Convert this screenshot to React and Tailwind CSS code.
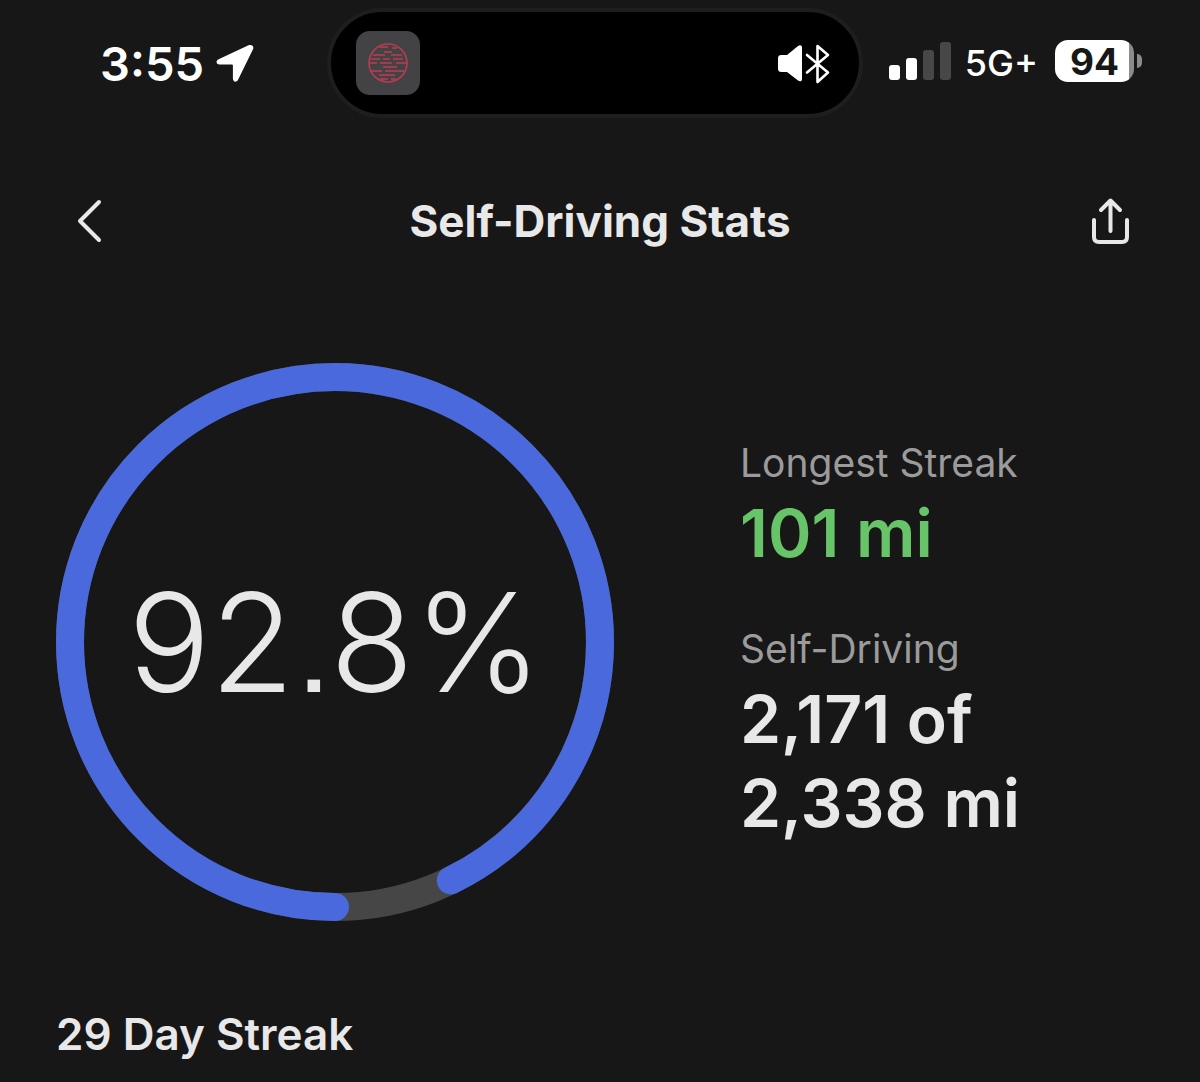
import React from "react";

const stats = [
  { label: "Longest Streak", lines: ["101 mi"], color: "text-[#68c468]" },
  { label: "Self-Driving", lines: ["2,171 of", "2,338 mi"], color: "text-[#e8e8e8]" },
];

const bands = [
  "M12 5h9", "M25 6h5", "M17 10h8", "M6 13h12", "M24 13h11", "M4 17h9", "M16 17h7", "M26 17h10",
  "M2 21h8", "M13 21h12", "M29 21h11", "M16 25h14", "M3 29h12", "M18 29h19", "M12 33h16", "M13 37h8", "M24 37h5",
];

const StatusBar = () => {
  return (
    <div className="grid grid-cols-[1fr_536px_1fr] items-center pl-12 pr-[58px] pt-2 text-white">
      <div className="flex items-center gap-3 pl-[52px]">
        <span className="text-[47px] leading-none font-semibold">3:55</span>
        <svg className="size-[38px]" viewBox="0 0 38 38" fill="white">
          <path d="M32.500 1.300 2.600 15.200C-.6 16.800 .2 20.500 3.400 20.500H15.900q1 0 1 1V34.500c0 3.600 3.800 4.300 5.300 1.100L37 5.300C38.400 2.200 35.600 0 32.500 1.300Z" />
        </svg>
      </div>

      <div className="flex h-[110px] items-center justify-between rounded-full border-4 border-[#1e1e20] bg-black pl-[25px] pr-[29px]">
        <div className="flex size-16 items-center justify-center rounded-[14px] bg-[#434346]">
          <svg className="size-[42px]" viewBox="0 0 42 42" fill="none" stroke="#b83c50" strokeWidth="1.600">
            <circle cx="21" cy="21" r="19" />
            {bands.map((d) => (
              <path key={d} d={d} />
            ))}
          </svg>
        </div>
        <svg className="h-[42px] w-[53px]" viewBox="0 0 53 42" fill="none">
          <path
            d="M4.500 13H10L21 4c2-1.500 4-.8 4 1.500V37c0 2.300-2 3-4 1.500L10 30H4.500C2 30 1 29 1 26.500v-10C1 14 2 13 4.500 13Z"
            fill="white"
          />
          <path
            d="M30 13 51 30.500 40.500 40V4L51 13 30 30.500"
            stroke="white"
            strokeWidth="2.600"
            strokeLinecap="round"
            strokeLinejoin="round"
          />
        </svg>
      </div>

      <div className="flex items-center justify-end">
        <div className="mb-1 flex h-[38px] items-end gap-[6px]">
          <div className="h-[15px] w-[11px] rounded-[3px] bg-white"></div>
          <div className="h-[22px] w-[11px] rounded-[3px] bg-white"></div>
          <div className="h-[30px] w-[11px] rounded-[3px] bg-[#474747]"></div>
          <div className="h-[38px] w-[11px] rounded-[3px] bg-[#474747]"></div>
        </div>
        <span className="ml-[14px] text-[36px] leading-none font-medium">5G+</span>
        <div className="mb-1 ml-[17px] flex items-center gap-[3px]">
          <div className="flex h-[42px] w-[79px] items-center justify-center rounded-[13px] bg-linear-to-r from-white from-94% to-[#8b8b8b] to-94% text-[37px] leading-none font-bold text-[#171717]">
            94
          </div>
          <div className="h-[14px] w-[5px] rounded-r-full bg-[#8b8b8b]"></div>
        </div>
      </div>
    </div>
  );
};

const Ring = ({ percent }) => {
  return (
    <div className="grid size-[558px] shrink-0 place-items-center">
      <svg className="col-start-1 row-start-1 size-full rotate-90" viewBox="0 0 558 558" fill="none" strokeWidth="28">
        <circle cx="279" cy="279" r="265" stroke="#464646" />
        <circle
          cx="279"
          cy="279"
          r="265"
          stroke="#4a69dd"
          strokeLinecap="round"
          pathLength="100"
          strokeDasharray={`${percent} 100`}
        />
      </svg>
      <span className="col-start-1 row-start-1 text-[137px] leading-none font-light [font-feature-settings:'ss07']">
        {percent}%
      </span>
    </div>
  );
};

const App = () => {
  return (
    <div className="min-h-screen bg-[#171717] font-['Inter',sans-serif] text-[#e8e8e8]">
      <StatusBar />

      <header className="mt-[75px] flex items-center justify-between px-[70px]">
        <button type="button" aria-label="Back" className="flex h-14 w-10 items-center justify-center">
          <svg className="h-[44px] w-[28px]" viewBox="0 0 28 44" fill="none" stroke="#e8e8e8" strokeWidth="4" strokeLinecap="round" strokeLinejoin="round">
            <path d="M23 3 4 22l19 19" />
          </svg>
        </button>
        <h1 className="text-[44px] leading-[56px] font-bold">Self-Driving Stats</h1>
        <button type="button" aria-label="Share" className="flex h-14 w-10 items-center justify-center">
          <svg className="h-[48px] w-[40px]" viewBox="0 0 40 48" fill="none" stroke="#e8e8e8" strokeWidth="4" strokeLinecap="round" strokeLinejoin="round">
            <path d="M4 23v17q0 5 5 5h23q5 0 5-5V23M20.500 34V4M11 13l9.500-9.500L30 13" />
          </svg>
        </button>
      </header>

      <main className="px-14">
        <section className="mt-[114px] flex items-center gap-[126px]">
          <Ring percent={92.8} />
          <div className="flex flex-col gap-[50px]">
            {stats.map((stat) => (
              <div key={stat.label}>
                <p className="text-[39px] leading-[48px] text-[#9b9b9b]">{stat.label}</p>
                <p className={`mt-1 text-[66px] leading-[84px] font-semibold ${stat.color}`}>
                  {stat.lines.map((line) => (
                    <span key={line} className="block whitespace-nowrap">{line}</span>
                  ))}
                </p>
              </div>
            ))}
          </div>
        </section>

        <h2 className="mt-[89px] text-[44px] leading-[48px] font-semibold">29 Day Streak</h2>
      </main>
    </div>
  );
};

export default App;
